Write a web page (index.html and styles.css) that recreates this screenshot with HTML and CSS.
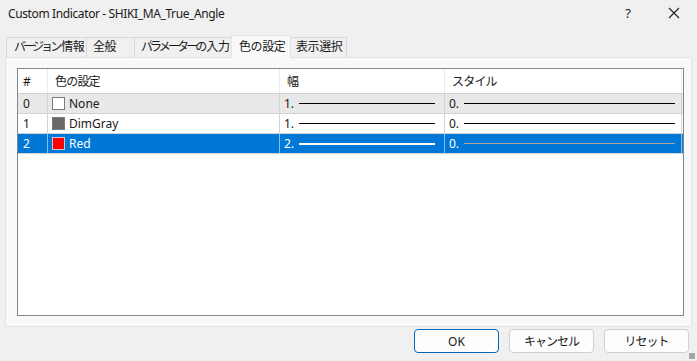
FILE: index.html
```html
<!DOCTYPE html>
<html lang="ja">
<head>
    <meta charset="UTF-8">
    <title>Custom Indicator - SHIKI_MA_True_Angle</title>
    <link rel="stylesheet" href="styles.css">
</head>
<body>
    <div class="titlebar">
        <span class="title">Custom Indicator - SHIKI_MA_True_Angle</span>
        <span class="ctl help">?</span>
        <span class="ctl close">
            <svg width="12" height="12" viewBox="0 0 12 12"><path d="M1 1L11 11M11 1L1 11" stroke="#222" stroke-width="1.1"/></svg>
        </span>
    </div>

    <div class="tabs">
        <div class="tab t-ver"><span class="kana">バージョン</span>情報</div>
        <div class="tab t-gen">全般</div>
        <div class="tab t-par"><span class="kana">パラメーターの</span>入力</div>
        <div class="tab active t-col">色の設定</div>
        <div class="tab t-vis">表示選択</div>
    </div>

    <div class="panel">
        <div class="listview">
            <div class="lv-row lv-head">
                <div class="cell c-num">#</div>
                <div class="cell c-color">色の設定</div>
                <div class="cell c-width">幅</div>
                <div class="cell c-style">スタイル</div>
            </div>
            <div class="lv-row alt">
                <div class="cell c-num">0</div>
                <div class="cell c-color"><span class="swatch" style="background:#ffffff"></span>None</div>
                <div class="cell c-width">1.<span class="line w-line"></span></div>
                <div class="cell c-style">0.<span class="line s-line"></span></div>
            </div>
            <div class="lv-row">
                <div class="cell c-num">1</div>
                <div class="cell c-color"><span class="swatch" style="background:#696969"></span>DimGray</div>
                <div class="cell c-width">1.<span class="line w-line"></span></div>
                <div class="cell c-style">0.<span class="line s-line"></span></div>
            </div>
            <div class="lv-row selected">
                <div class="cell c-num">2</div>
                <div class="cell c-color"><span class="swatch red" style="background:#ff0000"></span>Red</div>
                <div class="cell c-width">2.<span class="line w-line"></span></div>
                <div class="cell c-style">0.<span class="line s-line"></span></div>
            </div>
        </div>
    </div>

    <div class="buttons">
        <button type="button" class="btn default">OK</button>
        <button type="button" class="btn jp">キャンセル</button>
        <button type="button" class="btn jp">リセット</button>
    </div>
    <div class="grip"></div>
</body>
</html>
```

FILE: styles.css
```css
body {
    margin: 0;
    width: 697px;
    height: 361px;
    background-color: #f0f0f0;
    font-family: 'Noto Sans', 'Noto Sans CJK JP', sans-serif;
    font-size: 12px;
    color: #1a1a1a;
    position: relative;
    overflow: hidden;
}
.titlebar {
    height: 30px;
    display: flex;
    align-items: center;
}
.title {
    flex: 1;
    padding-left: 8px;
    padding-bottom: 4px;
    letter-spacing: -0.38px;
}
.ctl {
    width: 46px;
    text-align: center;
    padding-bottom: 4px;
}
.help {
    font-size: 13px;
}
.close {
    display: flex;
    justify-content: center;
}
.tabs {
    display: flex;
    align-items: flex-end;
    height: 27px;
    padding-left: 6px;
}
.tab {
    box-sizing: border-box;
    height: 20px;
    line-height: 18px;
    border: 1px solid #d9d9d9;
    border-bottom: none;
    margin-right: -1px;
    padding-left: 6px;
    background-color: #f0f0f0;
    white-space: nowrap;
    font-size: 12px;
    letter-spacing: -0.4px;
}
.tab .kana {
    letter-spacing: -2.9px;
    margin-right: 2px;
}
.tab.active {
    height: 23px;
    line-height: 21px;
    background-color: #f9f9f9;
    border-color: #e3e3e3;
    position: relative;
    z-index: 1;
    margin-bottom: -1px;
}
.t-ver { width: 81px; padding-left: 7px; }
.t-gen { width: 49px; }
.t-par { width: 98px; }
.t-col { width: 60px; padding-left: 7px; }
.t-vis { width: 57px; padding-left: 5px; }

.panel {
    margin: 0 5px 0 5px;
    height: 258px;
    background-color: #f9f9f9;
    border: 1px solid #e3e3e3;
    padding: 10px 7px 0 11px;
}
.listview {
    height: 246px;
    background: #ffffff;
    border: 1px solid #828790;
}
.lv-row {
    display: grid;
    grid-template-columns: 30px 232px 165px 237px;
    height: 19px;
    border-bottom: 1px solid #d3d3d3;
}
.lv-head {
    height: 24px;
}
.lv-head .cell {
    border-right-color: #ebebeb;
    padding-left: 7px;
    letter-spacing: -0.8px;
}
.lv-head .c-num { padding-left: 8px; }
.cell {
    border-right: 1px solid #d3d3d3;
    display: flex;
    align-items: center;
    padding-left: 4px;
    white-space: nowrap;
    overflow: hidden;
}
.lv-row .c-num { padding-left: 5px; }
.alt { background-color: #e8e8e8; }
.selected {
    background-color: #0078d7;
    color: #ffffff;
}
.selected .cell { border-right-color: #8cbde8; }
.swatch {
    width: 11px;
    height: 11px;
    border: 1px solid #7a7a7a;
    margin-right: 4px;
    flex: 0 0 auto;
}
.swatch.red { border-color: #c8c8c8; }
.line {
    height: 1px;
    background: #000000;
    margin-left: 5px;
}
.w-line { width: 136px; }
.s-line { width: 211px; }
.selected .w-line { background: #ffffff; height: 2px; }
.selected .s-line { background: #a8a8a8; }

.buttons {
    display: flex;
    justify-content: flex-end;
    gap: 10px;
    padding: 2px 8px 0 0;
}
.btn {
    width: 85px;
    height: 24px;
    border: 1px solid #d0d0d0;
    border-radius: 4px;
    background-color: #fdfdfd;
    font-family: 'Noto Sans', 'Noto Sans CJK JP', sans-serif;
    font-size: 12px;
    color: #1a1a1a;
    padding: 0;
}
.btn.jp {
    letter-spacing: -1px;
}
.btn.default {
    border-color: #0067c0;
}
.grip {
    position: absolute;
    right: 2px;
    bottom: 2px;
    width: 6px;
    height: 6px;
    background-image: radial-gradient(#a0a0a0 0.7px, transparent 0.8px);
    background-size: 2px 2px;
}
```
